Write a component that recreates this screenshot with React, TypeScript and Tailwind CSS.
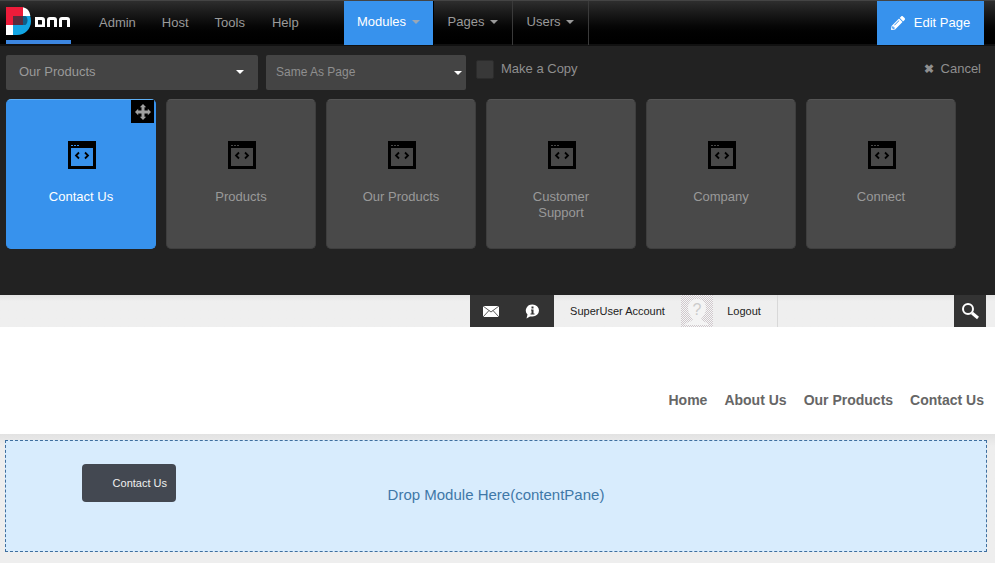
import { FaPencilAlt } from 'react-icons/fa';

const modules = ['Contact Us', 'Products', 'Our Products', 'Customer Support', 'Company', 'Connect'];

function Logo() {
  return (
    <svg width="65" height="28" viewBox="0 0 65 28" className="block">
      <path d="M0 0h11c8 0 14 6 14 14s-6 14-14 14H0z" fill="#12a5e3" />
      <path d="M17 0.300c4 1 6.500 3 7.300 8.700H17z" fill="#fff" />
      <rect width="17" height="18" fill="#ee1c3a" />
      <rect y="18" width="7" height="10" fill="#fff" />
      <rect x="7" y="9" width="10" height="9" fill="#5a2b3c" />
      <path d="M17 9h2c1.500 0 2.500 2 2.500 4.500S20 18 19 18h-2z" fill="#0d5f8a" />
      <path d="M29 10h7c2 0 3 1.200 3 3v7H29zM32 13v4.500h4V14c0-.6-.4-1-1-1z" fill="#fff" fillRule="evenodd" />
      <path d="M41 20v-7c0-2 1-3 3-3h4c2 0 3 1 3 3v7h-3v-7h-4v7z" fill="#fff" />
      <path d="M53 20v-7c0-2 1-3 3-3h5c2 0 3 1 3 3v7h-3v-7h-5v7z" fill="#fff" />
    </svg>
  );
}

function Caret({ className }: { className: string }) {
  return <span className={`inline-block h-0 w-0 border-x-[4px] border-t-[4px] border-x-transparent ${className}`} />;
}

function TopLink({ label }: { label: string }) {
  return <span className="text-[13px] text-[#9a9a9a]">{label}</span>;
}

function MenuTab({ label, width }: { label: string; width: string }) {
  return (
    <div className={`flex h-[44px] items-center justify-center gap-[6px] border-r border-[#3a3a3a] pb-[3px] text-[13px] text-[#9a9a9a] ${width}`}>
      {label}
      <Caret className="border-t-[#9a9a9a]" />
    </div>
  );
}

function ModuleIcon({ active }: { active: boolean }) {
  const fill = active ? '#3792ed' : '#494949';
  return (
    <svg width="28" height="28" viewBox="0 0 28 28" className="ml-[2px] block">
      <rect width="28" height="28" fill="#000" />
      <rect x="3" y="7" width="22" height="18" fill={fill} />
      <rect x="3" y="4" width="2" height="1" fill={fill} />
      <rect x="6" y="4" width="2" height="1" fill={fill} />
      <rect x="9" y="4" width="2" height="1" fill={fill} />
      <path d="M11 11.500 8 14.500l3 3M17 11.500l3 3-3 3" fill="none" stroke="#000" strokeWidth="1.800" />
    </svg>
  );
}

function MoveIcon() {
  return (
    <svg width="16" height="16" viewBox="0 0 16 16" fill="#a0a0a0">
      <path d="M8 0l3.200 3.200H9.500v3.300h3.300V4.800L16 8l-3.200 3.200V9.500H9.500v3.300h1.700L8 16l-3.200-3.200h1.700V9.500H3.200v1.700L0 8l3.200-3.200v1.700h3.300V3.200H4.800z" />
    </svg>
  );
}

function ModuleCard({ label, active }: { label: string; active: boolean }) {
  return (
    <div
      className={`relative flex h-[150px] w-[150px] flex-col items-center rounded-[5px] border pt-[41px] text-center text-[13px] leading-4 ${
        active
          ? 'border-[#3792ed] border-t-[#5fb0f5] bg-[#3792ed] text-white'
          : 'border-[#3e3e3e] border-t-[#555] bg-[#494949] text-[#999]'
      }`}
    >
      {active && (
        <div className="absolute top-0 right-[1px] flex h-[23px] w-[23px] items-center justify-center bg-black">
          <MoveIcon />
        </div>
      )}
      <ModuleIcon active={active} />
      <div className="mt-[20px] w-[90px]">{label}</div>
    </div>
  );
}

function Mail() {
  return (
    <svg width="16" height="11" viewBox="0 0 16 11" className="block">
      <rect width="16" height="11" fill="#fff" />
      <path d="M0 0l8 6 8-6M0 11l6-6.500M16 11l-6-6.500" fill="none" stroke="#333" strokeWidth="0.800" />
    </svg>
  );
}

function Info() {
  return (
    <svg width="15" height="15" viewBox="0 0 15 15" className="block">
      <path d="M7.500 0.500a6.500 6 0 0 1 0 12H5L1.500 14.500 2.500 10.500A6.500 6 0 0 1 7.500 0.500z" fill="#fff" />
      <rect x="6.500" y="2.500" width="2" height="2" fill="#333" />
      <path d="M6 5.500h2.500v4H9.500v1H5.500v-1h1v-3H6z" fill="#333" />
    </svg>
  );
}

function Avatar() {
  return (
    <div className="h-[32px] w-[32px] bg-[repeating-conic-gradient(#cfc8cc_0_25%,#f6f6f6_0_50%)] bg-[length:2px_2px]">
      <svg width="32" height="32" viewBox="0 0 32 32" className="block">
        <path d="M4 30c1-3 7-3 8-6-3-3-5-7-5-11 0-6 4-9 9-9s9 3 9 9c0 4-2 8-5 11 1 3 7 3 8 6z" fill="#f4f4f4" />
        <text x="16" y="20" textAnchor="middle" fontSize="16" fontFamily="Liberation Sans" fill="#ccc">?</text>
      </svg>
    </div>
  );
}

function SearchGlyph() {
  return (
    <svg width="18" height="18" viewBox="0 0 18 18" className="block">
      <circle cx="7" cy="7" r="5" fill="none" stroke="#fff" strokeWidth="2" />
      <path d="M11 11l6 5" stroke="#fff" strokeWidth="3" />
    </svg>
  );
}

export default function App() {
  return (
    <div className="h-[563px] w-[995px] overflow-hidden bg-[#eeeeee] font-['Liberation_Sans',Arial,sans-serif]">
      <div className="flex h-[46px] border-t border-[#444] border-b-2 border-b-[#111] bg-gradient-to-b from-[#2e2e2e] to-black">
        <div className="ml-[6px] h-[43px] w-[65px] border-b-4 border-[#3c86e0] pt-[6px]">
          <Logo />
        </div>
        <div className="ml-[28px] flex h-[44px] w-[245px] items-center gap-[26px]">
          <TopLink label="Admin" />
          <TopLink label="Host" />
          <TopLink label="Tools" />
          <span className="ml-[1px] text-[13px] text-[#9a9a9a]">Help</span>
        </div>
        <div className="flex h-[44px] w-[90px] items-center justify-center gap-[6px] border-r border-black bg-[#3792ed] pb-[3px] text-[13px] text-white">
          Modules
          <Caret className="border-t-[#9aa7b5]" />
        </div>
        <MenuTab label="Pages" width="w-[79px]" />
        <MenuTab label="Users" width="w-[76px]" />
        <div className="ml-auto mr-[11px] flex h-[44px] w-[107px] items-center justify-center gap-[9px] bg-[#3792ed] text-[13px] text-white">
          <FaPencilAlt size={14} />
          Edit Page
        </div>
      </div>

      <div className="h-[249px] bg-[#222222] px-[6px] pt-[9px]">
        <div className="flex items-start">
          <div className="flex h-[35px] w-[252px] items-center justify-between rounded-[2px] bg-[#444] px-[13px] pb-[2px] text-[13px] text-[#999]">
            Our Products
            <Caret className="mr-[1px] border-t-white" />
          </div>
          <div className="ml-[8px] flex h-[35px] w-[200px] items-center justify-between rounded-[2px] bg-[#444] pl-[10px] pr-[4px] pb-[1px] text-xs text-[#8f8f8f]">
            Same As Page
            <Caret className="mt-[2px] border-t-white" />
          </div>
          <div className="ml-[10px] mt-[5px] h-[19px] w-[18px] rounded-[2px] border border-[#2c2c2c] bg-[#383838]" />
          <div className="ml-[7px] mt-[4px] text-[13px] text-[#8f8f8f]">Make a Copy</div>
          <div className="ml-auto mr-[8px] mt-[4px] flex items-center gap-[7px] text-[13px] text-[#8f8f8f]">
            <span className="text-[12px] font-bold leading-none">✖</span>
            Cancel
          </div>
        </div>
        <div className="mt-[9px] flex gap-[10px]">
          {modules.map((m, i) => (
            <ModuleCard key={m} label={m} active={i === 0} />
          ))}
        </div>
      </div>

      <div className="flex h-[32px] bg-gradient-to-b from-[#e4e4e4] to-[#efefef] to-20%">
        <div className="ml-[470px] flex h-full w-[84px] items-center gap-[26px] bg-[#333] pl-[13px]">
          <Mail />
          <Info />
        </div>
        <div className="flex h-full w-[127px] items-center justify-center text-[11px] text-[#222]">SuperUser Account</div>
        <Avatar />
        <div className="flex h-full w-[65px] items-center justify-center border-r border-[#d8d8d8] pr-[2px] text-[11px] text-[#222]">Logout</div>
        <div className="ml-[176px] flex h-full w-[32px] items-center justify-center bg-[#333]">
          <SearchGlyph />
        </div>
      </div>

      <div className="flex h-[107px] items-start justify-end gap-[17px] bg-white pr-[11px] pt-[63px] text-sm font-bold text-[#666]">
        <span>Home</span>
        <span>About Us</span>
        <span>Our Products</span>
        <span>Contact Us</span>
      </div>

      <div className="h-[129px] bg-gradient-to-b from-[#e2e2e2] to-[#eeeeee] to-[10%] px-[5px] pt-[6px]">
        <div className="relative flex h-[112px] w-[982px] items-center justify-center border border-dashed border-[#3f6f9f] bg-[#d8ecfd] pb-[2px] text-[15px] text-[#3f78a8]">
          <div className="absolute left-[76px] top-[23px] flex h-[38px] w-[94px] items-center justify-end rounded-[4px] bg-[#434851] pr-[9px] text-[11px] text-[#f0f0f0]">
            Contact Us
          </div>
          Drop Module Here(contentPane)
        </div>
      </div>
    </div>
  );
}
